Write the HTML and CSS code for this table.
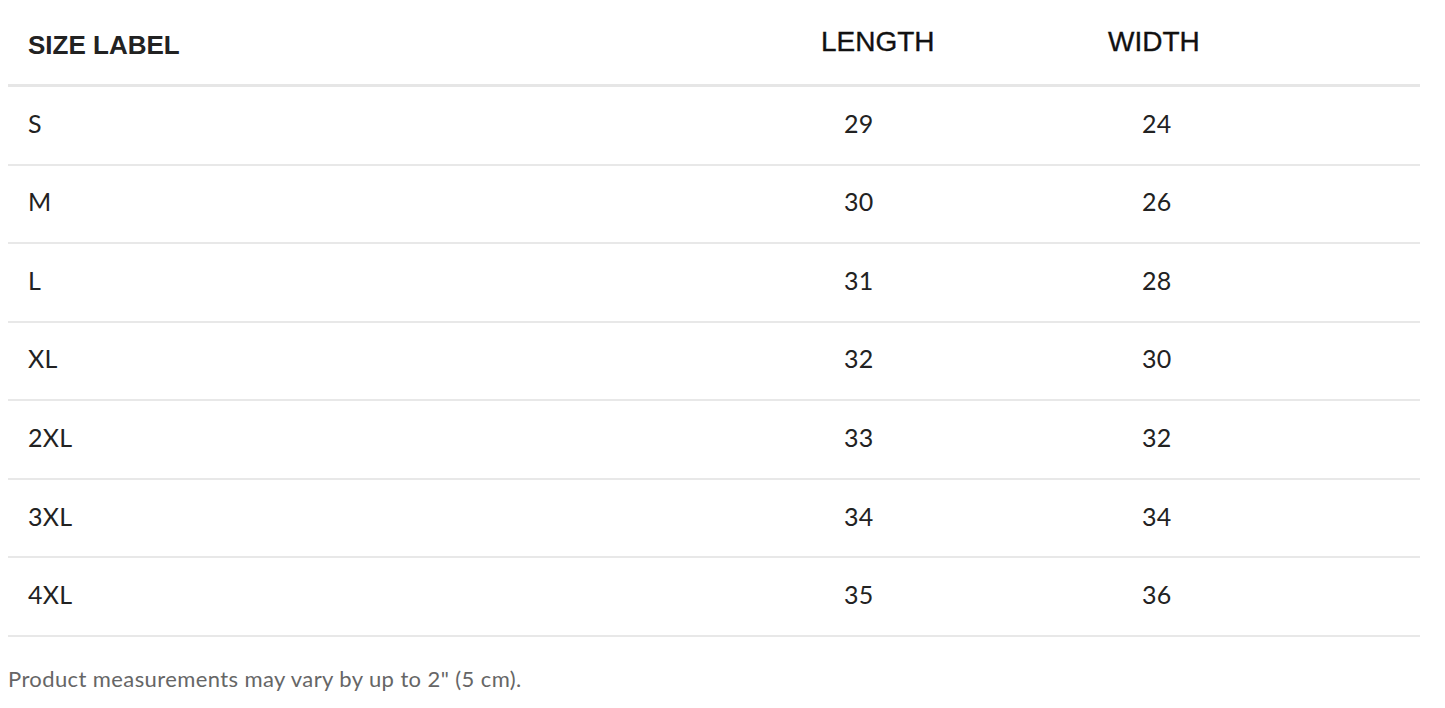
FILE: index.html
```html
<!DOCTYPE html>
<html>
<head>
<meta charset="utf-8">
<link rel="stylesheet" href="styles.css">
</head>
<body>
<div class="chart">
  <div class="row head">
    <div class="cell c1 label">SIZE LABEL</div>
    <div class="cell c2">LENGTH</div>
    <div class="cell c3">WIDTH</div>
  </div>
  <div class="row"><div class="cell c1">S</div><div class="cell c2">29</div><div class="cell c3">24</div></div>
  <div class="row"><div class="cell c1">M</div><div class="cell c2">30</div><div class="cell c3">26</div></div>
  <div class="row"><div class="cell c1">L</div><div class="cell c2">31</div><div class="cell c3">28</div></div>
  <div class="row"><div class="cell c1">XL</div><div class="cell c2">32</div><div class="cell c3">30</div></div>
  <div class="row"><div class="cell c1">2XL</div><div class="cell c2">33</div><div class="cell c3">32</div></div>
  <div class="row"><div class="cell c1">3XL</div><div class="cell c2">34</div><div class="cell c3">34</div></div>
  <div class="row"><div class="cell c1">4XL</div><div class="cell c2">35</div><div class="cell c3">36</div></div>
</div>
<p class="note">Product measurements may vary by up to 2" (5 cm).</p>
</body>
</html>
```
FILE: styles.css
```css
html, body {
  margin: 0;
  padding: 0;
  background: #fff;
}
body {
  padding: 0 25px 0 8px;
  font-family: Lato, "Liberation Sans", sans-serif;
  color: #222;
}
.chart {
  display: flex;
  flex-direction: column;
}
.row {
  display: grid;
  grid-template-columns: 813px 287px 1fr;
  height: 78.57px;
  box-sizing: border-box;
  border-bottom: 2px solid #e8e8e8;
  align-items: center;
  font-size: 25px;
  letter-spacing: 0.3px;
}
.row .cell {
  padding-bottom: 5px;
}
.row .c1 { padding-left: 20px; }
.row .c2 { padding-left: 23px; }
.row .c3 { padding-left: 34px; }
.row.head {
  height: 87px;
  border-bottom: 3px solid #e6e6e6;
  font-family: "Liberation Sans", Arial, sans-serif;
  font-size: 28px;
  letter-spacing: 0;
  color: #111;
}
.row.head .cell {
  padding-bottom: 0;
  -webkit-text-stroke: 0.35px #111;
}
.row.head .c2, .row.head .c3 { padding-left: 0; }
.row.head .label {
  font-weight: bold;
  font-size: 26px;
  color: #222;
  padding-top: 6px;
  -webkit-text-stroke: 0;
}
.note {
  margin: 28px 0 0 0;
  font-size: 22px;
  letter-spacing: 0.4px;
  color: #666;
}
```
